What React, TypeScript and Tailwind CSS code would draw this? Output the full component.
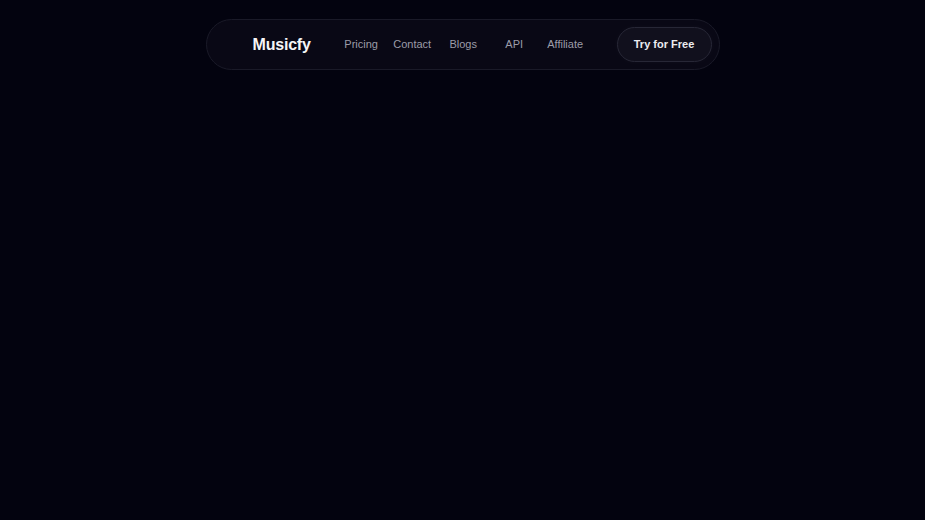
const links = ['Pricing', 'Contact', 'Blogs', 'API', 'Affiliate']

export default function App() {
  return (
    <div className="min-h-[520px] w-full bg-[#03030f] pt-[19px] font-['Liberation_Sans',Arial,sans-serif]">
      <nav className="mx-auto flex h-[51px] w-[514px] items-center rounded-full border border-[#1a1a28] bg-[#090815] pl-[46px] pr-[7px]">
        <span className="text-[16px] font-bold tracking-[-0.2px] text-[#f5f5f7]">Musicfy</span>
        <div className="ml-[25px] flex items-center">
          {links.map((l) => (
            <a key={l} className="w-[51px] text-center text-[11px] text-[#9c9ca8]">
              {l}
            </a>
          ))}
        </div>
        <button className="ml-auto flex h-[35px] w-[95px] items-center justify-center rounded-full border border-[#272736] bg-[#11101d] text-[11px] font-bold text-[#ececf0] shadow-[0_0_6px_rgba(255,255,255,0.03)]">
          Try for Free
        </button>
      </nav>
    </div>
  )
}
